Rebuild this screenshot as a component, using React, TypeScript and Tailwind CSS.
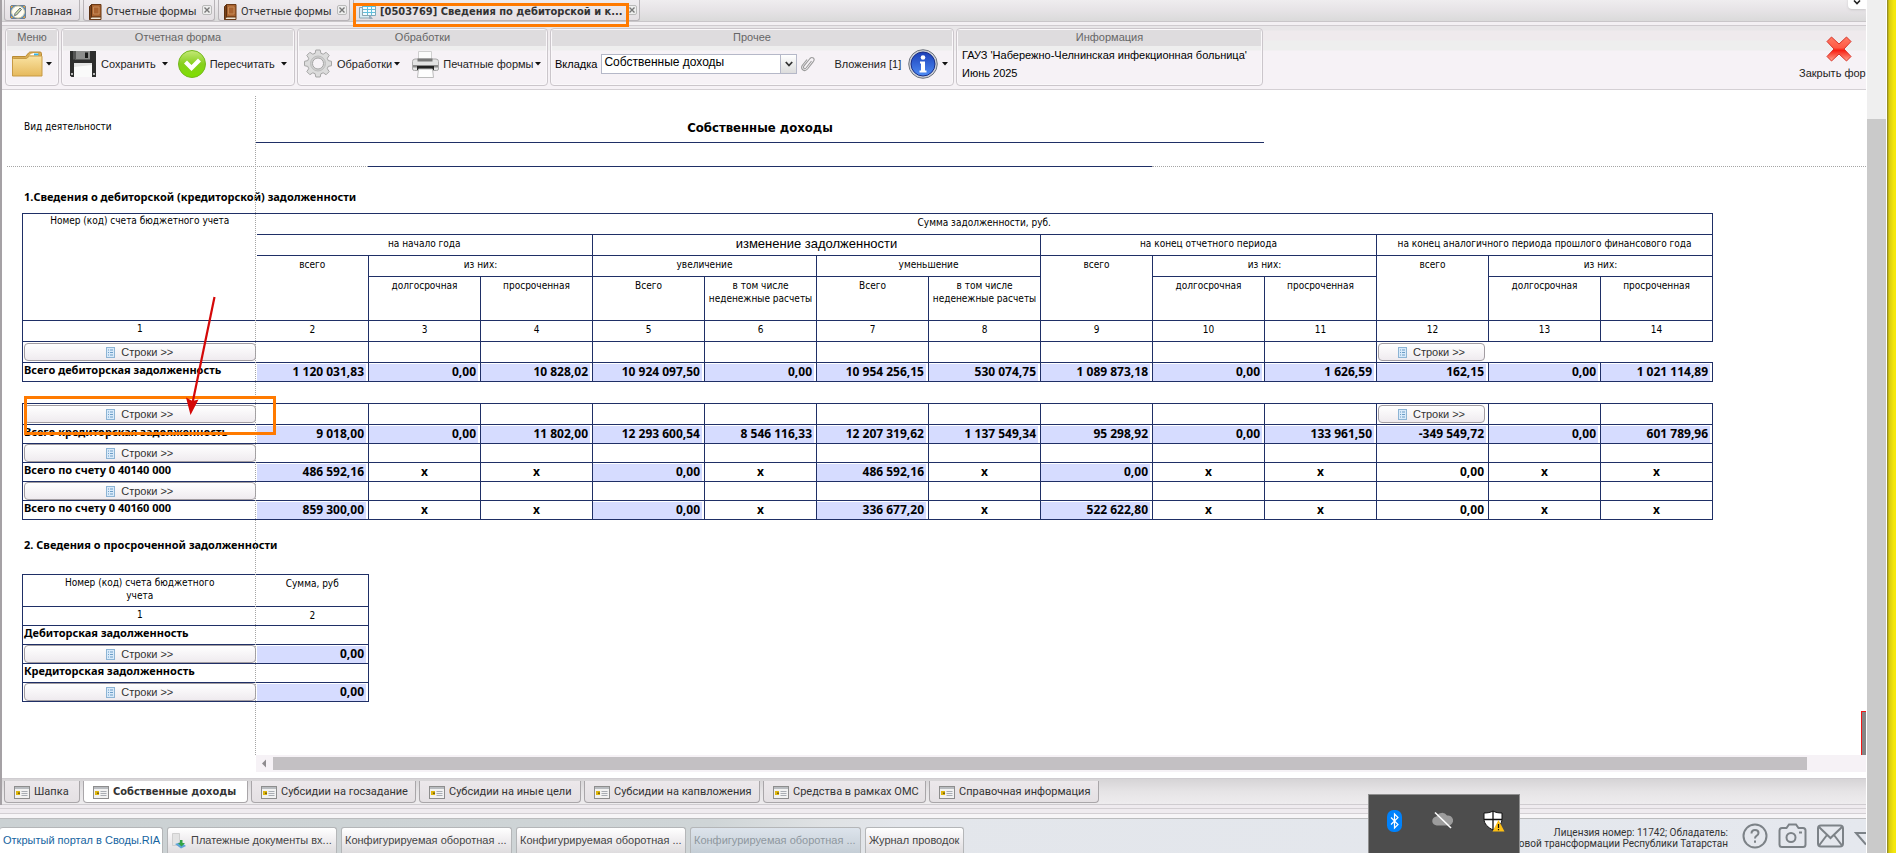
import type { ReactNode } from 'react';

const ui = "font-['Liberation_Sans',Arial,sans-serif]";
const tahoma = "font-['DejaVu_Sans_Condensed','DejaVu_Sans',sans-serif]";
const noto = "font-['Noto_Sans',sans-serif]";
const roboto = "font-['Roboto',sans-serif]";

/* ---------- icons ---------- */

function BookIcon() {
  return (
    <svg width="13" height="16" viewBox="0 0 13 16" className="shrink-0">
      <path d="M2.500 .5h9.500v12.500H2.500z" fill="#a9622f" stroke="#6b3a17" />
      <path d="M.5 2.500 2.500 .5v12.500L.5 15.500z" fill="#7c4219" stroke="#5a2f10" />
      <path d="M.5 15.500 2.500 13h9.500v2.500z" fill="#efe6d6" stroke="#6b3a17" />
      <path d="M4.500 3h5.500v7H4.500z" fill="none" stroke="#c58a58" />
    </svg>
  );
}

function HomeIcon() {
  return (
    <svg width="16" height="14" viewBox="0 0 16 14" className="shrink-0">
      <rect x=".5" y=".5" width="15" height="13" rx="1.500" fill="#3f86cf" stroke="#6c7f94" />
      <ellipse cx="8" cy="7" rx="6.500" ry="6" fill="#fffdf3" stroke="#d8cda0" />
      <path d="M4.500 10.500 5 8.500l5-5.500L11.500 4.500 6.500 10z" fill="#cfe0a8" stroke="#55606b" strokeWidth=".9" />
      <path d="M1 1h2.500L1 3.500zM15 1h-2.500L15 3.500zM1 13h2.500L1 10.500zM15 13h-2.500l2.500-2.500z" fill="#e7a13a" />
    </svg>
  );
}

function SheetIcon() {
  return (
    <svg width="17" height="16" viewBox="0 0 17 16" className="shrink-0">
      <path d="M3.500 .5h13v11h-13z" fill="#f4fcff" stroke="#7fa9bb" />
      <path d="M4 1h12v2H4z" fill="#4fc3e8" />
      <path d="M4 5.500h12M4 8.500h12M8.500 3v8M12.500 3v8" stroke="#62bfdc" />
      <path d="M.5 3.500h3v8h7v2.500H.5z" fill="#d9edf5" stroke="#8aa5b0" />
      <path d="m11 11 3 4h-4z" fill="#9ab" />
    </svg>
  );
}

function FolderIcon() {
  return (
    <svg width="31" height="26" viewBox="0 0 31 26" className="shrink-0">
      <defs>
        <linearGradient id="fold" x1="0" y1="0" x2="0" y2="1">
          <stop offset="0" stopColor="#fae3a2" />
          <stop offset="1" stopColor="#e6b95c" />
        </linearGradient>
      </defs>
      <path d="M.5 24V5.500h13l3-3.500q.7-1 2-1H28q1.500 0 1.500 1.500V24z" fill="#d9ac55" stroke="#b98a34" />
      <path d="M17 4.500q2-2.500 5-2.500h4v3z" fill="#fff" />
      <path d="M22 2.500h4.500v2H22z" fill="#35b4e8" />
      <path d="M.5 25V8.500q0-1 1-1h13l3-2.500h12q.5 0 .5.5V25z" fill="url(#fold)" stroke="#c79a45" />
    </svg>
  );
}

function FloppyIcon() {
  return (
    <svg width="26" height="26" viewBox="0 0 26 26" className="shrink-0">
      <path d="M0 0h26v26H1.500L0 24.500z" fill="#2d2d2d" />
      <path d="M5 0h15v8.500H5z" fill="#8d8d8d" />
      <path d="M3 0h3v8.500H3z" fill="#555" />
      <path d="M15 1.500h3V7h-3z" fill="#1a1a1a" />
      <path d="M4 12h18v14H4z" fill="#fafafa" />
      <path d="M4 12h18v2L4 16z" fill="#e4e4e4" />
      <path d="M1 22h2v2H1zM23 22h2v2h-2z" fill="#bbb" />
    </svg>
  );
}

function CheckIcon() {
  return (
    <svg width="28" height="28" viewBox="0 0 28 28" className="shrink-0">
      <defs>
        <linearGradient id="grn" x1="0" y1="0" x2="0" y2="1">
          <stop offset="0" stopColor="#c5e878" />
          <stop offset=".5" stopColor="#86cf1e" />
          <stop offset="1" stopColor="#7fe000" />
        </linearGradient>
      </defs>
      <circle cx="14" cy="14" r="13.500" fill="url(#grn)" stroke="#74b81e" />
      <path d="m6 13.500 3-3 4.500 4.500 6.500-6.500 3 3-9.500 9.500z" fill="#fff" />
    </svg>
  );
}

function GearIcon() {
  return (
    <svg width="30" height="30" viewBox="0 0 30 30" className="shrink-0">
      <path
        d="M12.800 1h4.400l.7 3.300 2.300.9 2.900-1.900 3.100 3.100-1.900 2.900.9 2.300 3.300.7v4.400l-3.300.7-.9 2.300 1.900 2.900-3.100 3.100-2.900-1.900-2.300.9-.7 3.300h-4.400l-.7-3.300-2.300-.9-2.900 1.900-3.100-3.100 1.900-2.900-.9-2.300L1.500 16.700v-4.400l3.300-.7.900-2.300-1.900-2.900 3.100-3.100 2.900 1.900 2.300-.9z"
        fill="#dcdcdc" stroke="#a6a6a6"
      />
      <circle cx="15" cy="14.500" r="7.500" fill="#cfcfcf" stroke="#bdbdbd" />
      <circle cx="15" cy="14.500" r="5.500" fill="#f6f2f6" stroke="#a6a6a6" />
    </svg>
  );
}

function PrinterIcon() {
  return (
    <svg width="27" height="27" viewBox="0 0 27 27" className="shrink-0">
      <path d="M6.500 .5h13v10h-13z" fill="#fbfbfb" stroke="#cfcfcf" />
      <path d="M.5 10.500Q.5 8 3 8h21q2.500 0 2.500 2.500V18q0 1.500-2 1.500h-22Q.5 19.500.5 18z" fill="#e3e3e3" stroke="#a9a9a9" />
      <path d="M5.500 7.500h15v3h-15z" fill="#777" />
      <path d="M1 14h25v2.500H1z" fill="#8b8b8b" />
      <path d="M5 15h17v4H5z" fill="#222" />
      <path d="M6.500 18h14l1 8.500h-16z" fill="#fdfdfd" stroke="#bbb" />
    </svg>
  );
}

function InfoIcon() {
  return (
    <svg width="30" height="31" viewBox="0 0 30 31" className="shrink-0">
      <defs>
        <linearGradient id="inf" x1="0" y1="0" x2="0" y2="1">
          <stop offset="0" stopColor="#1b3fb8" />
          <stop offset="1" stopColor="#4e8cf5" />
        </linearGradient>
      </defs>
      <circle cx="15" cy="15" r="14.300" fill="#c9cdd6" stroke="#70757f" />
      <circle cx="15" cy="15" r="12" fill="url(#inf)" stroke="#1a2f88" />
      <circle cx="15" cy="8.500" r="2.300" fill="#fff" />
      <path d="M12 12.500h5v9h1.500v2h-7v-2H13v-7h-1z" fill="#fff" />
    </svg>
  );
}

function ClipIcon() {
  return (
    <svg width="14" height="16" viewBox="0 0 14 16" className="shrink-0">
      <path d="M10.500 5 5 12q-1 1.200-2 .3t-.2-2.100L9 2.500q1.700-1.800 3.300-.5t.2 3.300L6.500 13q-2.200 2.500-4.500 1T1.200 9.500L6 3.500" fill="none" stroke="#9b9b9b" strokeWidth="1.100" />
    </svg>
  );
}

function RedCross() {
  return (
    <svg width="26" height="26" viewBox="0 0 26 26">
      <defs>
        <linearGradient id="crs" x1="0" y1="0" x2="0" y2="1">
          <stop offset="0" stopColor="#ff7a63" />
          <stop offset=".45" stopColor="#ff5a45" />
          <stop offset=".55" stopColor="#f81d10" />
          <stop offset="1" stopColor="#ffa58f" />
        </linearGradient>
      </defs>
      <path d="M5.500 1 13 8l7.500-7L25 5.500 18 13l7 7.500-4.500 4.500L13 18l-7.500 7L1 20.500 8 13 1 5.500z" fill="url(#crs)" stroke="#d8342a" />
    </svg>
  );
}

function FormIcon() {
  return (
    <svg width="16" height="13" viewBox="0 0 16 13" className="shrink-0">
      <rect x=".5" y=".5" width="15" height="12" fill="#f2f2f2" stroke="#8d8d8d" />
      <path d="M1 1h14v2H1z" fill="#b9bcc0" />
      <path d="M2 5h4v4H2z" fill="#dfb70e" />
      <path d="M4 6.500h2v1.500H4z" fill="#7d640c" />
      <path d="M7.500 5.500h6M7.500 7.500h6M7.500 9.500h6" stroke="#a9adb3" />
    </svg>
  );
}

function RowsIcon() {
  return (
    <svg width="9" height="11" viewBox="0 0 9 11" className="shrink-0">
      <rect x=".5" y=".5" width="8" height="10" fill="#d9eafa" stroke="#8db4d4" />
      <path d="M2 3h1M4 3h3M2 5.500h1M4 5.500h3M2 8h1M4 8h3" stroke="#6c9dc6" />
    </svg>
  );
}

function Caret() {
  return (
    <svg width="6" height="4" viewBox="0 0 6 4" className="shrink-0">
      <path d="M0 0h6L3 3.500z" fill="#111" />
    </svg>
  );
}

/* ---------- header ---------- */

function TabClose() {
  return (
    <button type="button" aria-label="Закрыть вкладку" className="mt-px flex h-[10px] w-[10px] items-center justify-center self-start rounded-[2px] border border-[#b9b9b9] bg-[#eeeeee]">
      <svg width="6" height="6" viewBox="0 0 6 6"><path d="m.5.5 5 5m0-5-5 5" stroke="#777" strokeWidth="1.400" /></svg>
    </button>
  );
}

function TopTab({ width, icon, label, active, closable }: { width: string; icon: ReactNode; label: string; active?: boolean; closable?: boolean }) {
  return (
    <div className={`flex h-[21px] shrink-0 items-center rounded-b-[3px] border border-t-0 border-[#b8b4b8] bg-linear-to-b from-[#efecef] to-[#e4dfe3] pl-[5px] pr-[2px] pt-[4px] ${width}`}>
      <button type="button" className={`flex min-w-0 flex-1 items-center gap-[4px] whitespace-nowrap text-[11px] text-[#333] ${active ? `font-bold ${tahoma}` : roboto}`}>
        {icon}
        <span>{label}</span>
      </button>
      {closable && <TabClose />}
    </div>
  );
}

function Group({ width, title, children }: { width: string; title: string; children: ReactNode }) {
  return (
    <section className={`flex h-[58px] shrink-0 flex-col rounded-[4px] border border-[#cbc6cb] p-px shadow-[inset_0_0_0_1px_#faf8fa] ${width}`}>
      <h2 className="h-[16px] bg-[#dedcde] text-center text-[11px] leading-[14px] text-[#666]">{title}</h2>
      <div className="flex flex-1 items-center pb-[2px]">{children}</div>
    </section>
  );
}

function Ribbon() {
  const btn = 'flex items-center whitespace-nowrap text-[11px] text-[#222]';
  return (
    <div className={`flex h-[64px] items-start gap-[2px] overflow-hidden border-b border-[#d4d0d4] bg-[linear-gradient(#e8e6e8_0,#e8e6e8_4px,#efeaed_5px,#efeaed_14px,#eeeeee_15px,#eeeeee_24px,#f6f2f6_25px)] pl-[3px] pt-[2px] ${ui}`}>
      <Group width="w-[54px]" title="Меню">
        <button type="button" aria-label="Меню" className={`${btn} gap-[3px] pl-[5px]`}><FolderIcon /><Caret /></button>
      </Group>
      <Group width="w-[234px]" title="Отчетная форма">
        <button type="button" className={`${btn} pl-[7px]`}><FloppyIcon /><span className="pl-[5px] pr-[6px]">Сохранить</span><Caret /></button>
        <button type="button" className={`${btn} pl-[10px]`}><CheckIcon /><span className="pl-[4px] pr-[6px]">Пересчитать</span><Caret /></button>
      </Group>
      <Group width="w-[251px]" title="Обработки">
        <button type="button" className={`${btn} pl-[4px]`}><GearIcon /><span className="pl-[4px] pr-[2px]">Обработки</span><Caret /></button>
        <button type="button" className={`${btn} pl-[12px]`}><PrinterIcon /><span className="pl-[4px] pr-[2px]">Печатные формы</span><Caret /></button>
      </Group>
      <Group width="w-[404px]" title="Прочее">
        <label htmlFor="sheet-tab" className="pl-[3px] pr-[4px] text-[11px] text-black">Вкладка</label>
        <div className="relative h-[20px] w-[196px]">
          <select id="sheet-tab" defaultValue="own" className="block h-[20px] w-full appearance-none border border-[#b5b8c8] bg-white pb-[4px] pl-[2px] text-[12px] leading-[14px] text-black">
            <option value="own">Собственные доходы</option>
          </select>
          <span className="pointer-events-none absolute inset-y-0 right-0 flex w-[17px] items-center justify-center border border-[#b5b8c8] bg-linear-to-b from-white to-[#dcdcdc]">
            <svg width="8" height="6" viewBox="0 0 8 6"><path d="m.8 1 3.200 3.500L7.200 1" fill="none" stroke="#333" strokeWidth="1.800" /></svg>
          </span>
        </div>
        <span className="pl-[4px]"><ClipIcon /></span>
        <button type="button" className={`${btn} pl-[19px]`}><span className="pr-[7px]">Вложения [1]</span><InfoIcon /><span className="pl-[4px]"><Caret /></span></button>
      </Group>
      <Group width="w-[307px]" title="Информация">
        <div className="self-start whitespace-nowrap pl-[4px] text-[11px] leading-[18px] text-black">
          <p>ГАУЗ 'Набережно-Челнинская инфекционная больница'</p>
          <p>Июнь 2025</p>
        </div>
      </Group>
      <button type="button" className="ml-auto flex w-[67px] shrink-0 flex-col items-start gap-[3px] whitespace-nowrap pt-[8px] text-[11px] text-[#222]">
        <span className="pl-[27px]"><RedCross /></span>
        <span>Закрыть фор</span>
      </button>
    </div>
  );
}

/* ---------- report sheet ---------- */

const line = 'border-[#1f2f66]';
const cell = `border ${line} p-0`;
const first = `border border-r-0 ${line} p-0`;

function RowsButton() {
  return (
    <button type="button" className={`mx-auto flex h-[18px] w-[calc(100%-2px)] items-center justify-center gap-[6px] rounded-[4px] border border-[#a29da2] bg-linear-to-b from-white to-[#efebef] text-[11px] leading-none text-[#333] ${ui}`}>
      <RowsIcon />Строки &gt;&gt;
    </button>
  );
}

function Amount({ value, blue = true }: { value: string; blue?: boolean }) {
  if (value === 'x') return <div className="h-[17px] text-center leading-[15px]">x</div>;
  return <div className={`mr-[2px] mt-px h-[17px] pr-[2px] text-right leading-[15px] ${blue ? 'bg-[#d6dcff]' : ''}`}>{value}</div>;
}

function Values({ label, values, plain = [] }: { label: string; values: string[]; plain?: number[] }) {
  return (
    <tr className={`h-[19px] text-[12px] font-bold ${noto}`}>
      <th scope="row" className={`${first} whitespace-nowrap pl-px text-left align-top text-[11px] leading-[14px]`}>{label}</th>
      {values.map((v, i) => (
        <td key={i} className={`${cell} ${i === 0 ? 'border-l-0' : ''}`}><Amount value={v} blue={!plain.includes(i)} /></td>
      ))}
    </tr>
  );
}

function edges(i: number, open: boolean) {
  if (i === 0) return `border border-l-0 ${line} p-0`;
  if (open && i >= 10) return 'border border-y-[#1f2f66] border-l-[#1f2f66] border-r-white p-0';
  return cell;
}

function ButtonRow({ height, second = false, open = false }: { height: string; second?: boolean; open?: boolean }) {
  return (
    <tr className={height}>
      <td className={first}><RowsButton /></td>
      {Array.from({ length: 13 }, (_, i) => (
        <td key={i} className={edges(i, open)}>{second && i === 10 ? <div className="pr-[2px]"><RowsButton /></div> : null}</td>
      ))}
    </tr>
  );
}

const head = `${cell} pt-[2px] align-top font-normal`;

function DebtTable() {
  return (
    <table className={`ml-[20px] w-[1691px] table-fixed border-collapse text-center text-[10px] leading-[13px] text-black ${tahoma}`}>
      <colgroup>
        <col className="w-[234px]" />
        {Array.from({ length: 13 }, (_, i) => <col key={i} className="w-[112px]" />)}
      </colgroup>
      <tbody>
        <tr className="h-[21px]">
          <th rowSpan={4} className={`${first} align-top font-normal`}>Номер (код) счета бюджетного учета</th>
          <th colSpan={13} className={`${head} border-l-0`}>Сумма задолженности, руб.</th>
        </tr>
        <tr className="h-[21px]">
          <th colSpan={3} className={`${head} border-l-0`}>на начало года</th>
          <th colSpan={4} className={`${head} text-[13px] ${ui}`}>изменение задолженности</th>
          <th colSpan={3} className={head}>на конец отчетного периода</th>
          <th colSpan={3} className={head}>на конец аналогичного периода прошлого финансового года</th>
        </tr>
        <tr className="h-[21px]">
          <th rowSpan={2} className={`${head} border-l-0`}>всего</th>
          <th colSpan={2} className={head}>из них:</th>
          <th colSpan={2} className={head}>увеличение</th>
          <th colSpan={2} className={head}>уменьшение</th>
          <th rowSpan={2} className={head}>всего</th>
          <th colSpan={2} className={head}>из них:</th>
          <th rowSpan={2} className={head}>всего</th>
          <th colSpan={2} className={head}>из них:</th>
        </tr>
        <tr className="h-[44px]">
          <th className={head}>долгосрочная</th>
          <th className={head}>просроченная</th>
          <th className={head}>Всего</th>
          <th className={head}>в том числе неденежные расчеты</th>
          <th className={head}>Всего</th>
          <th className={head}>в том числе неденежные расчеты</th>
          <th className={head}>долгосрочная</th>
          <th className={head}>просроченная</th>
          <th className={head}>долгосрочная</th>
          <th className={head}>просроченная</th>
        </tr>
        <tr className="h-[21px]">
          <th className={`${first} pt-px align-top font-normal`}>1</th>
          {Array.from({ length: 13 }, (_, i) => <th key={i} className={`${head} ${i === 0 ? 'border-l-0' : ''}`}>{i + 2}</th>)}
        </tr>
        <ButtonRow height="h-[21px]" second open />
        <Values label="Всего дебиторская задолженность" values={['1 120 031,83', '0,00', '10 828,02', '10 924 097,50', '0,00', '10 954 256,15', '530 074,75', '1 089 873,18', '0,00', '1 626,59', '162,15', '0,00', '1 021 114,89']} />
        <tr className="h-[22px]"><td colSpan={14} /></tr>
        <ButtonRow height="h-[21px]" second />
        <Values label="Всего кредиторская задолженность" values={['9 018,00', '0,00', '11 802,00', '12 293 600,54', '8 546 116,33', '12 207 319,62', '1 137 549,34', '95 298,92', '0,00', '133 961,50', '-349 549,72', '0,00', '601 789,96']} />
        <ButtonRow height="h-[19px]" />
        <Values label="Всего по счету 0 40140 000" plain={[10]} values={['486 592,16', 'x', 'x', '0,00', 'x', '486 592,16', 'x', '0,00', 'x', 'x', '0,00', 'x', 'x']} />
        <ButtonRow height="h-[19px]" />
        <Values label="Всего по счету 0 40160 000" plain={[10]} values={['859 300,00', 'x', 'x', '0,00', 'x', '336 677,20', 'x', '522 622,80', 'x', 'x', '0,00', 'x', 'x']} />
      </tbody>
    </table>
  );
}

function OverdueTable() {
  const label = `${first} whitespace-nowrap pl-px text-left align-top text-[11px] font-bold leading-[14px] ${noto}`;
  const sum = `${cell} border-l-0 text-[12px] font-bold ${noto}`;
  return (
    <table className={`ml-[20px] w-[347px] table-fixed border-collapse text-center text-[10px] leading-[13px] text-black ${tahoma}`}>
      <colgroup><col className="w-[234px]" /><col className="w-[112px]" /></colgroup>
      <thead>
        <tr className="h-[32px]">
          <th className={`${first} px-10 pt-px align-top font-normal`}>Номер (код) счета бюджетного учета</th>
          <th className={`${head} border-l-0`}>Сумма, руб</th>
        </tr>
        <tr className="h-[19px]">
          <th className={`${first} pt-px align-top font-normal`}>1</th>
          <th className={`${head} border-l-0`}>2</th>
        </tr>
      </thead>
      <tbody>
        <tr className="h-[19px]"><th scope="row" className={label}>Дебиторская задолженность</th><td className={sum} /></tr>
        <tr className="h-[19px]"><td className={first}><RowsButton /></td><td className={sum}><Amount value="0,00" /></td></tr>
        <tr className="h-[19px]"><th scope="row" className={label}>Кредиторская задолженность</th><td className={sum} /></tr>
        <tr className="h-[19px]"><td className={first}><RowsButton /></td><td className={sum}><Amount value="0,00" /></td></tr>
      </tbody>
    </table>
  );
}

function Sheet() {
  return (
    <main className="relative flex min-h-0 flex-1 flex-col overflow-hidden bg-white pb-[6px]">
      <div className="min-h-0 flex-1 overflow-hidden">
        <div className={`flex h-[53px] items-start text-black ${tahoma}`}>
          <div className="w-[254px] shrink-0 pl-[22px] pt-[30px] text-[10px] leading-[14px]">Вид деятельности</div>
          <div className="h-full w-[1008px] shrink-0 border-b border-[#1f2f66] pt-[30px] text-center text-[13px] font-bold leading-4">Собственные доходы</div>
        </div>
        <div className="flex h-[24px] pl-[5px]">
          <div className="w-[361px] shrink-0 border-b border-dotted border-[#a5a5a5]" />
          <div className="w-[784px] shrink-0 border-b border-[#1f2f66]" />
          <div className="flex-1 border-b border-dotted border-[#a5a5a5]" />
        </div>
        <h3 className={`h-[46px] pl-[22px] pt-[22px] text-[11px] font-bold leading-4 text-black ${noto}`}>1.Сведения о дебиторской (кредиторской) задолженности</h3>
        <DebtTable />
        <h3 className={`h-[54px] pl-[22px] pt-[17px] text-[11px] font-bold leading-4 text-black ${noto}`}>2. Сведения о просроченной задолженности</h3>
        <OverdueTable />
      </div>
      <div className="flex h-[17px] shrink-0 pl-[254px]">
        <div className="flex flex-1 items-center bg-[#f6f2f6]">
          <svg width="17" height="17" viewBox="0 0 17 17" className="shrink-0"><path d="M10 4.500v8L6 8.500z" fill="#8f8c8f" /></svg>
          <div className="mr-[59px] h-[13px] flex-1 bg-[#c3c0c3]" />
        </div>
      </div>
      <div className="absolute bottom-[23px] left-[253px] top-[6px] border-l border-dotted border-[#a5a5a5]" />
      <div className="absolute bottom-[23px] right-0 h-[44px] w-[5px] border-l border-t border-[#f01818] bg-[#858585]" />
      <div className="absolute left-[22px] top-[306px] h-[39px] w-[252px] border-[3px] border-[#ff7a00]" />
      <svg width="40" height="122" viewBox="0 0 40 122" className="absolute left-[180px] top-[205px]">
        <path d="M32.500 2 10.500 108" stroke="#d40808" strokeWidth="2.200" />
        <path d="M8.500 120 4 102.500l6.500 3.500 6-1.500z" fill="#d40808" />
      </svg>
    </main>
  );
}

/* ---------- bottom ---------- */

const sheetTabs: [string, string][] = [
  ['Шапка', 'w-[76px]'],
  ['Собственные доходы', 'w-[165px]'],
  ['Субсидии на госзадание', 'w-[165px]'],
  ['Субсидии на иные цели', 'w-[162px]'],
  ['Субсидии на капвложения', 'w-[176px]'],
  ['Средства в рамках ОМС', 'w-[163px]'],
  ['Справочная информация', 'w-[170px]'],
];

function SheetTabs() {
  return (
    <nav className="flex h-[27px] shrink-0 gap-[3px] border-b border-t border-[#cfccd0] bg-linear-to-b from-[#d6d4d6] via-[#e6e4e6] to-[#eeecee] pl-[2px] pt-[2px]">
      {sheetTabs.map(([label, width], i) => (
        <button
          key={label}
          type="button"
          className={`flex h-[22px] shrink-0 items-center gap-[4px] whitespace-nowrap rounded-b-[4px] border border-t-0 border-[#a9a6a9] pl-[9px] pt-[2px] text-[11px] text-[#333] ${width} ${i === 1 ? `bg-white font-bold ${tahoma}` : `bg-linear-to-b from-[#ece8eb] to-[#e4e0e3] ${roboto}`}`}
        >
          <FormIcon />{label}
        </button>
      ))}
    </nav>
  );
}

function TaskButton({ width, look, children }: { width: string; look: string; children: ReactNode }) {
  return (
    <button type="button" className={`flex h-[26px] shrink-0 items-center gap-[4px] self-end whitespace-nowrap rounded-t-[3px] border border-b-0 border-[#b4b6b8] px-[3px] text-[11px] ${width} ${look}`}>{children}</button>
  );
}

const normalTask = 'bg-linear-to-b from-white via-[#efedef] to-[#dedcde] text-[#444]';

function Tray() {
  return (
    <div className="absolute bottom-0 left-[1368px] flex h-[59px] w-[152px] items-start justify-between border border-b-0 border-[#8f8f8f] bg-[#4d4d4d] pl-[18px] pr-[14px] pt-[15px]">
      <svg width="15" height="22" viewBox="0 0 15 22">
        <rect width="15" height="22" rx="6.500" fill="#0082fc" />
        <path d="m4 7.500 7 7-3.500 3.500V4L11 7.500l-7 7" fill="none" stroke="#fff" strokeWidth="1.200" />
      </svg>
      <svg width="22" height="20" viewBox="0 0 22 20">
        <path d="M5 15.500a4.500 4.500 0 0 1-.5-9A6 6 0 0 1 15 5.500a5 5 0 0 1 2 10z" fill="#9c9c9c" />
        <path d="M3 2.500 19 18" stroke="#fff" strokeWidth="1.600" />
      </svg>
      <svg width="22" height="22" viewBox="0 0 22 22">
        <path d="M10 1c2.500 1.500 5.500 2 9 2v6c0 5-4 8.500-9 11-5-2.500-9-6-9-11V3c3.500 0 6.500-.5 9-2z" fill="#fff" stroke="#111" />
        <path d="M10 1v19M1 9.500h18" stroke="#111" strokeWidth="1.300" />
        <path d="M15.500 10 21.500 21.500h-12z" fill="#fdbf14" />
        <path d="M15.500 14v4M15.500 19v1.300" stroke="#111" strokeWidth="1.200" />
      </svg>
    </div>
  );
}

function Footer() {
  const icon = 'fill-none stroke-[#7c8287]';
  return (
    <footer className={`flex h-[35px] shrink-0 items-end gap-[4px] overflow-hidden border-t border-[#bbbcbe] bg-[linear-gradient(100deg,#cbd1d3_0,#cfd5d7_38%,#dfe2e4_44%,#e3e6eb_48%,#e5e8ee_100%)] ${ui}`}>
      <TaskButton width="w-[163px]" look="border-l-0 bg-white text-[#1664a0]">Открытый портал в Своды.RIA</TaskButton>
      <TaskButton width="w-[170px]" look={normalTask}>
        <svg width="16" height="16" viewBox="0 0 16 16" className="shrink-0">
          <path d="M1.500 .5h7v12h-7z" fill="#e3e3e3" stroke="#cfcfcf" />
          <path d="m4 11 6-2 5 4-5 2.500z" fill="#5ea3d6" />
          <path d="M9 7h2.500v3H14l-3.500 3.500L7 10h2z" fill="#33a545" />
        </svg>
        Платежные документы вх...
      </TaskButton>
      <TaskButton width="w-[171px]" look={normalTask}>Конфигурируемая оборотная ...</TaskButton>
      <TaskButton width="w-[170px]" look={normalTask}>Конфигурируемая оборотная ...</TaskButton>
      <TaskButton width="w-[171px]" look="bg-linear-to-b from-[#dde4ec] to-[#c5ced6] text-[#8e979e]">Конфигурируемая оборотная ...</TaskButton>
      <TaskButton width="w-[99px]" look={normalTask}>Журнал проводок</TaskButton>
      <div className={`ml-auto flex h-full min-w-0 items-center gap-[14px] ${roboto}`}>
        <p className="whitespace-nowrap pt-[4px] text-right text-[10px] leading-[11px] text-[#333]">Лицензия номер: 11742; Обладатель:<br />Министерство цифровой трансформации Республики Татарстан</p>
        <div className="flex items-center gap-[10px]">
          <button type="button" aria-label="Справка">
            <svg width="26" height="26" viewBox="0 0 26 26" className={icon} strokeWidth="2">
              <circle cx="13" cy="13" r="11.500" />
              <path d="M9.500 10.500q0-3.500 3.500-3.500t3.500 3q0 1.700-2 2.800-1.500.9-1.500 2.700M13 17.500v2.200" />
            </svg>
          </button>
          <button type="button" aria-label="Снимок экрана">
            <svg width="29" height="26" viewBox="0 0 28 26" className={icon} strokeWidth="2">
              <path d="M3.500 5H8l2.500-3.500h7L20 5h4.500Q27 5 27 7.500v14Q27 24 24.500 24h-21Q1 24 1 21.500v-14Q1 5 3.500 5z" />
              <circle cx="12.500" cy="14.500" r="4.500" />
              <path d="M20.500 9.500h3" />
            </svg>
          </button>
          <button type="button" aria-label="Почта">
            <svg width="27" height="26" viewBox="0 0 27 26" className={icon} strokeWidth="2">
              <rect x="1" y="2.500" width="25" height="21" rx="3" />
              <path d="m2 4 11.500 11L25 4M2 22.500 10 12M25 22.500 17 12" />
            </svg>
          </button>
          <button type="button" aria-label="Свернуть">
            <svg width="12" height="26" viewBox="0 0 12 26" className={icon} strokeWidth="2"><path d="M14 10H2l10 11.500" /></svg>
          </button>
        </div>
      </div>
    </footer>
  );
}

export default function App() {
  return (
    <div className="flex h-screen w-full overflow-hidden bg-white">
      <div className="relative flex min-w-0 flex-1 flex-col overflow-hidden">
        <div className="flex min-h-0 flex-1 flex-col border-l-2 border-[#a5a1a5]">
          <header className="relative shrink-0">
            <div className="flex h-[22px] gap-[3px] overflow-hidden border-b border-[#c9c6c9] bg-linear-to-b from-[#efedef] via-[#e6e3e6] to-[#dadada] pl-[2px]">
              <TopTab width="w-[76px]" icon={<HomeIcon />} label="Главная" />
              <TopTab width="w-[132px]" icon={<BookIcon />} label="Отчетные формы" closable />
              <TopTab width="w-[132px]" icon={<BookIcon />} label="Отчетные формы" closable />
              <TopTab width="w-[287px]" icon={<SheetIcon />} label="[0503769] Сведения по дебиторской и к..." active closable />
            </div>
            <div className="h-[4px] border-b border-[#cfcbcf] bg-[#f3f0f3]" />
            <button type="button" aria-label="Развернуть" className="absolute -top-1 right-0 flex h-[13px] w-[18px] items-end justify-center rounded-bl-[4px] bg-white pb-[4px] shadow">
              <svg width="8" height="5" viewBox="0 0 8 5"><path d="M1 .5 4 3.500 7 .5" fill="none" stroke="#222" strokeWidth="1.600" /></svg>
            </button>
            <div className="absolute left-[351px] top-[3px] h-[24px] w-[276px] border-[3px] border-[#ff7a00]" />
          </header>
          <Ribbon />
          <Sheet />
          <SheetTabs />
        </div>
        <div className="h-[4px] shrink-0 border-b border-[#d3cfd3] bg-[#efebef]" />
        <div className="h-[5px] shrink-0 border-b border-[#d3cfd3] bg-[#efebef]" />
        <div className="h-[4px] shrink-0 bg-[#f7f5f7]" />
        <Footer />
        <Tray />
      </div>
      <div className="ml-px flex w-[19px] shrink-0 flex-col bg-[#efefef] pt-[119px]">
        <div className="flex-1 bg-[#cacaca]" />
      </div>
      <div className="w-[10px] shrink-0 bg-[linear-gradient(90deg,#fff_0,#fff_1px,#807a2a_1px,#d8cc10_3px,#f5e80c_8px)]" />
    </div>
  );
}
